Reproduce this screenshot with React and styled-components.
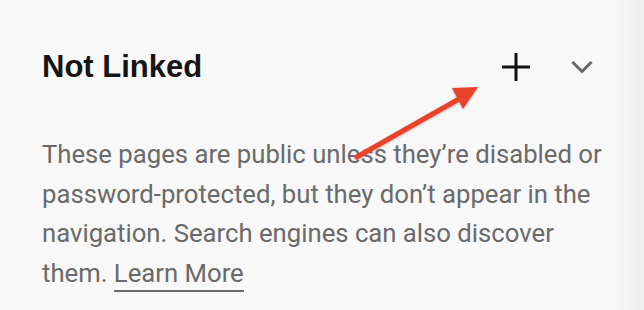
import styled, { createGlobalStyle } from 'styled-components';

const GlobalStyle = createGlobalStyle`
  html, body {
    margin: 0;
    padding: 0;
  }
  body {
    width: 644px;
    height: 310px;
    overflow: hidden;
    background: linear-gradient(to right, #f8f8f8 0, #f8f8f8 612px, #eeeeee 644px);
  }
`;

const Panel = styled.section`
  position: relative;
  width: 644px;
  height: 310px;
  box-sizing: border-box;
  padding: 48px 0 0 42px;
  font-family: Roboto, "Liberation Sans", Arial, sans-serif;
`;

const Header = styled.div`
  display: flex;
  align-items: center;
  height: 38px;
`;

const Title = styled.h3`
  margin: 0;
  flex: 1;
  font-family: "Liberation Sans", Arial, sans-serif;
  font-size: 31px;
  font-weight: 700;
  color: #151515;
`;

const Actions = styled.div`
  display: flex;
  align-items: center;
  gap: 40px;
  margin-right: 51px;

  svg {
    display: block;
  }
`;

const Description = styled.p`
  margin: 49px 0 0 0;
  width: 570px;
  font-size: 25.7px;
  line-height: 39.5px;
  color: #6a6a6a;
`;

const LearnMore = styled.a`
  color: #6a6a6a;
  text-decoration: none;
  border-bottom: 2px solid #6a6a6a;
  padding-bottom: 2px;
`;

const Annotation = styled.svg`
  position: absolute;
  left: 0;
  top: 0;
  pointer-events: none;
`;

function App() {
  return (
    <>
      <GlobalStyle />
      <Panel>
        <Header>
          <Title>Not Linked</Title>
          <Actions>
            <svg width="30" height="30" viewBox="0 0 30 30">
              <path d="M15 1v28M1 15h28" stroke="#111" strokeWidth="3" fill="none" />
            </svg>
            <svg width="22" height="16" viewBox="0 0 22 16">
              <path d="M1.5 3l9.5 9.5L20.5 3" stroke="#666" strokeWidth="3" fill="none" />
            </svg>
          </Actions>
        </Header>
        <Description>
          These pages are public unless they’re disabled or password-protected, but they don’t appear in the
          navigation. Search engines can also discover them. <LearnMore href="#">Learn More</LearnMore>
        </Description>
        <Annotation width="644" height="310" viewBox="0 0 644 310">
          <defs>
            <filter id="arrowShadow" x="-20%" y="-20%" width="140%" height="140%">
              <feDropShadow dx="0" dy="1" stdDeviation="1" floodColor="#000" floodOpacity="0.25" />
            </filter>
          </defs>
          <g filter="url(#arrowShadow)" fill="#e8432b">
            <path d="M355 158 L459 99" stroke="#e8432b" strokeWidth="5" strokeLinecap="butt" />
            <path d="M478 87 L452 88 L463 109 Z" />
          </g>
        </Annotation>
      </Panel>
    </>
  );
}

export default App;
